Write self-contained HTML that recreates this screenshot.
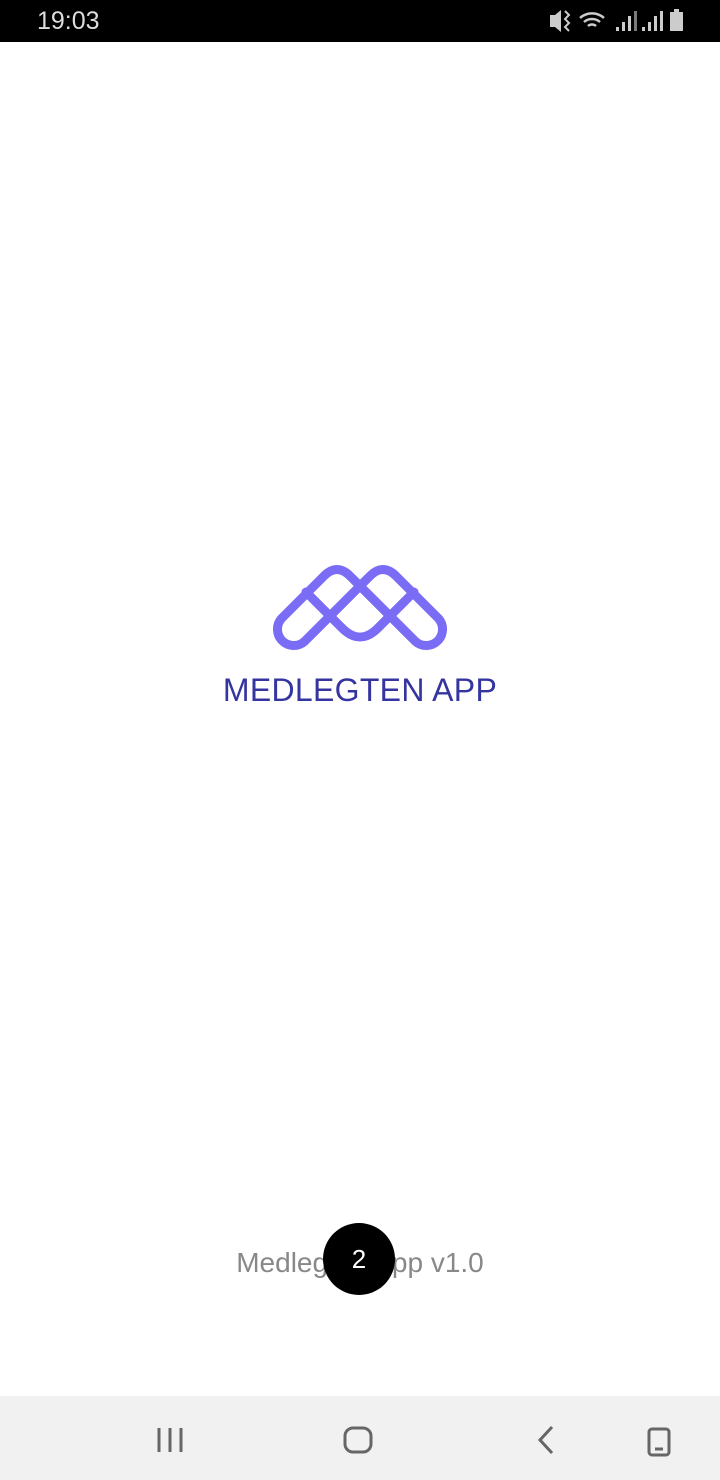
<!DOCTYPE html>
<html><head><meta charset="utf-8"><style>
html,body{margin:0;padding:0;width:720px;height:1480px;background:#fff;overflow:hidden;font-family:"Liberation Sans",sans-serif;position:relative}
.sb{position:absolute;top:0;left:0;width:720px;height:42px;background:#000;color:#ddd;font-size:25px}
.nav{position:absolute;top:1396px;left:0;width:720px;height:84px;background:#f1f1f1}
</style></head><body>
<div class="sb"><span style="position:absolute;left:37px;top:7px">19:03</span>
<svg width="190" height="42" style="position:absolute;left:530px;top:0" fill="#ccc" stroke="#ccc">
<path d="M20 15h5l6-5v22l-6-5h-5z" stroke="none"/><path d="M35 11l4 4-4 4 4 4-4 4 4 4" fill="none" stroke-width="2"/>
<path d="M50 18a18 18 0 0 1 24 0M54 22a12 12 0 0 1 16 0M58 26a6 6 0 0 1 8 0" fill="none" stroke-width="2.5"/>
<rect x="86" y="27" width="3" height="4" stroke="none"/><rect x="92" y="22" width="3" height="9" stroke="none"/><rect x="98" y="16" width="3" height="15" stroke="none"/><rect x="104" y="11" width="3" height="20" stroke="none" opacity=".6"/>
<rect x="112" y="27" width="3" height="4" stroke="none"/><rect x="118" y="22" width="3" height="9" stroke="none"/><rect x="124" y="16" width="3" height="15" stroke="none"/><rect x="130" y="11" width="3" height="20" stroke="none"/>
<rect x="140" y="12" width="13" height="19" stroke="none"/><rect x="144" y="9" width="5" height="3" stroke="none"/>
</svg></div>
<svg width="720" height="720" style="position:absolute;left:0;top:0" fill="none" stroke="#7a6cf5" stroke-width="9" stroke-linecap="round" stroke-linejoin="round">
<path d="M281.5 618.5 L324 576 Q337 563 350 576 L415.5 641.5 A16.3 16.3 0 0 0 438.5 618.5 L396 576 Q383 563 370 576 L304.5 641.5 A16.3 16.3 0 0 1 281.5 618.5 Z"/>
<path d="M306 592 L342 628 Q360 646 378 628 L414 592"/>
</svg>
<div style="position:absolute;top:672px;left:0;width:720px;text-align:center;color:#3535a0;font-size:32px;letter-spacing:0.3px">MEDLEGTEN APP</div>
<div style="position:absolute;top:1247px;left:0;width:720px;text-align:center;color:#888;font-size:28px">Medlegten App v1.0</div>
<div style="position:absolute;left:323px;top:1223px;width:72px;height:72px;border-radius:50%;background:#000;color:#fff;font-size:26px;text-align:center;line-height:72px">2</div>
<div class="nav">
<svg width="720" height="84" fill="none" stroke="#666" stroke-width="3">
<path d="M159 32v24M170 32v24M181 32v24"/>
<rect x="345" y="32" width="26" height="24" rx="8"/>
<path d="M552 31l-12 13 12 13"/>
<rect x="649" y="33" width="20" height="26" rx="3"/><path d="M655 53h8"/>
</svg></div>
</body></html>
